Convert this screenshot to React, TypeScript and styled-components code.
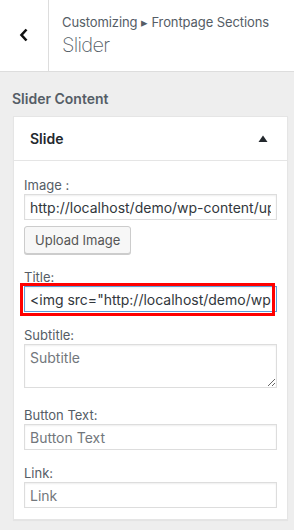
import React from "react";
import styled, { createGlobalStyle } from "styled-components";

const GlobalStyle = createGlobalStyle`
  html, body {
    margin: 0;
    padding: 0;
    background: #eeeeee;
    font-family: Inter, "Noto Sans", sans-serif;
    -webkit-font-smoothing: antialiased;
  }
  * {
    box-sizing: border-box;
  }
`;

const Page = styled.div`
  width: 294px;
  min-height: 530px;
  background: #eeeeee;
`;

const Header = styled.div`
  display: flex;
  height: 72px;
  background: #fff;
  border-bottom: 1px solid #dddddd;
`;

const BackButton = styled.button`
  width: 49px;
  flex: none;
  border: 0;
  border-right: 1px solid #dddddd;
  background: #fff;
  display: flex;
  align-items: center;
  justify-content: center;
  padding: 0 0 2px;
  color: #111;
`;

const HeaderTitle = styled.div`
  display: flex;
  flex-direction: column;
  padding: 13px 0 0 13px;
  color: #555d66;
`;

const Breadcrumb = styled.span`
  font-size: 13px;
  line-height: 18px;
  letter-spacing: -0.1px;
`;

const SectionName = styled.span`
  font-size: 20px;
  font-weight: 200;
  line-height: 26px;
  margin-top: 1px;
  letter-spacing: -0.7px;
`;

const Body = styled.div`
  padding: 17px 0 20px 13px;
`;

const GroupTitle = styled.h3`
  margin: 0 0 7px -1px;
  font-size: 14px;
  font-weight: 600;
  line-height: 20px;
  color: #555d66;
`;

const Card = styled.div`
  width: 275px;
  background: #fff;
  border: 1px solid #e5e5e5;
  box-shadow: 0 1px 1px rgba(0, 0, 0, 0.04);
`;

const CardHead = styled.div`
  display: flex;
  align-items: center;
  justify-content: space-between;
  height: 44px;
  padding: 0 19px 0 16px;
  border-bottom: 1px solid #e5e5e5;
  font-size: 14px;
  font-weight: 600;
  color: #23282d;
`;

const CardBody = styled.div`
  padding: 15px 10px 11px;
  display: flex;
  flex-direction: column;
  gap: 14px;
`;

const Field = styled.div<{ $tall?: boolean }>`
  display: flex;
  flex-direction: column;
  align-items: flex-start;
  margin-bottom: ${(p) => (p.$tall ? "4px" : "0")};
`;

const Label = styled.label`
  font-size: 13px;
  line-height: 18px;
  color: #555d66;
`;

const InputWrap = styled.div`
  position: relative;
  width: 100%;
`;

const TextInput = styled.input<{ $focus?: boolean }>`
  display: block;
  width: 100%;
  height: 26px;
  margin: 0;
  padding: 3px 5px;
  font-family: inherit;
  font-size: 14px;
  color: #32373c;
  background: #fff;
  border: 1px solid ${(p) => (p.$focus ? "#5b9dd9" : "#dddddd")};
  box-shadow: inset 0 1px 2px rgba(0, 0, 0, 0.07);
  outline: none;
  &::placeholder {
    color: #72777c;
  }
`;

const TextArea = styled.textarea`
  display: block;
  width: 100%;
  height: 44px;
  margin: 0;
  padding: 3px 5px;
  font-family: inherit;
  font-size: 14px;
  line-height: 20px;
  color: #32373c;
  border: 1px solid #dddddd;
  box-shadow: inset 0 1px 2px rgba(0, 0, 0, 0.07);
  outline: none;
  &::placeholder {
    color: #72777c;
  }
`;

const UploadButton = styled.button`
  margin-top: 6px;
  height: 28px;
  padding: 0 10px;
  font-family: inherit;
  font-size: 13px;
  color: #555555;
  background: #f7f7f7;
  border: 1px solid #cccccc;
  border-radius: 3px;
  box-shadow: 0 1px 0 #cccccc;
`;

const Highlight = styled.div`
  position: absolute;
  left: -4px;
  right: 2px;
  top: -3px;
  bottom: -4px;
  border: 3px solid #ff0000;
  pointer-events: none;
`;

const Chevron = () => (
  <svg width="10" height="14" viewBox="0 0 10 14">
    <path d="M7.5 1.5 L2.5 7 L7.5 12.5" fill="none" stroke="currentColor" strokeWidth="2.6" />
  </svg>
);

const Caret = () => (
  <svg width="10" height="8" viewBox="0 0 10 8">
    <path d="M5 0.5 L9.5 7 L0.5 7 Z" fill="#23282d" />
  </svg>
);

export default function App() {
  return (
    <Page>
      <GlobalStyle />
      <Header>
        <BackButton aria-label="Back">
          <Chevron />
        </BackButton>
        <HeaderTitle>
          <Breadcrumb>Customizing ▸ Frontpage Sections</Breadcrumb>
          <SectionName>Slider</SectionName>
        </HeaderTitle>
      </Header>
      <Body>
        <GroupTitle>Slider Content</GroupTitle>
        <Card>
          <CardHead>
            <span>Slide</span>
            <Caret />
          </CardHead>
          <CardBody>
            <Field>
              <Label>Image :</Label>
              <TextInput readOnly value="http://localhost/demo/wp-content/uploads/slide.jpg" />
              <UploadButton>Upload Image</UploadButton>
            </Field>
            <Field>
              <Label>Title:</Label>
              <InputWrap>
                <TextInput
                  $focus
                  readOnly
                  value={'<img src="http://localhost/demo/wp-content/uploads/x.jpg">'}
                />
                <Highlight />
              </InputWrap>
            </Field>
            <Field $tall>
              <Label>Subtitle:</Label>
              <TextArea placeholder="Subtitle" />
            </Field>
            <Field>
              <Label>Button Text:</Label>
              <TextInput placeholder="Button Text" />
            </Field>
            <Field>
              <Label>Link:</Label>
              <TextInput placeholder="Link" />
            </Field>
          </CardBody>
        </Card>
      </Body>
    </Page>
  );
}
